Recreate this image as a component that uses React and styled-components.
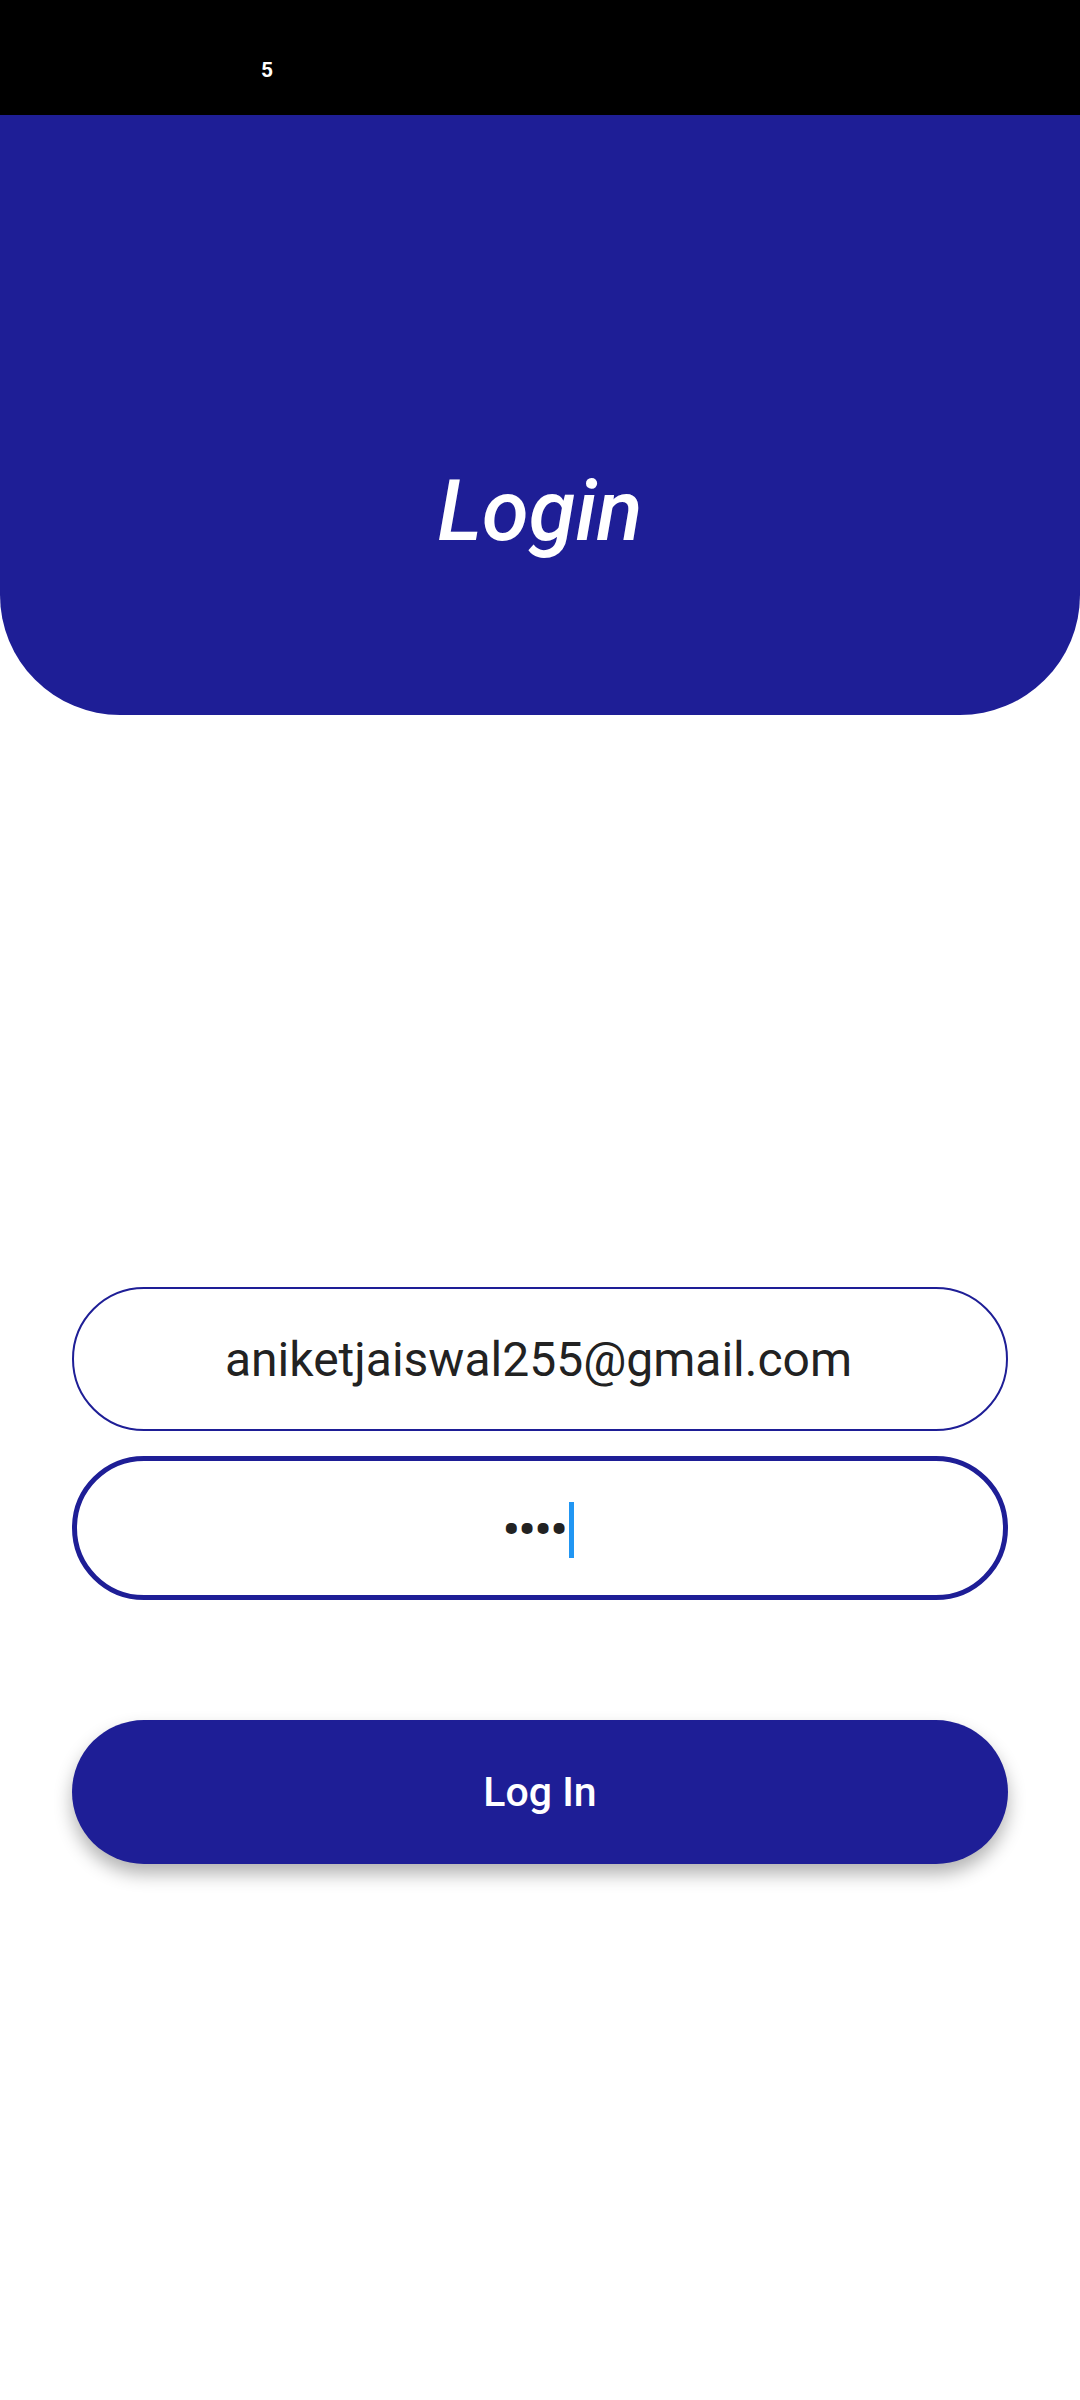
import React from "react";
import styled, { createGlobalStyle } from "styled-components";

const BLUE = "#1e1e96";

const GlobalStyle = createGlobalStyle`
  html, body {
    margin: 0;
    padding: 0;
    background: #ffffff;
  }
  body {
    font-family: Roboto, "Noto Sans", sans-serif;
  }
`;

const App = () => {
  return (
    <Page>
      <GlobalStyle />
      <StatusBar>
        <StatusText>5</StatusText>
      </StatusBar>
      <Header>
        <Title>Login</Title>
      </Header>
      <Form>
        <Field>aniketjaiswal255@gmail.com</Field>
        <Field $focused>
          <Dots>••••</Dots>
          <Caret />
        </Field>
        <LoginBtn type="button">Log In</LoginBtn>
      </Form>
    </Page>
  );
};

export default App;

const Page = styled.div`
  width: 1080px;
  min-height: 2400px;
  background: #ffffff;
  display: flex;
  flex-direction: column;
`;

const StatusBar = styled.div`
  height: 115px;
  background: #000000;
  display: flex;
  align-items: flex-start;
  padding: 60px 0 0 261px;
  box-sizing: border-box;
`;

const StatusText = styled.span`
  color: #ffffff;
  font-size: 21px;
  line-height: 21px;
  font-weight: 700;
`;

const Header = styled.div`
  height: 600px;
  box-sizing: border-box;
  padding-top: 354px;
  background: ${BLUE};
  border-radius: 0 0 120px 120px;
  display: flex;
  justify-content: center;
  align-items: flex-start;
`;

const Title = styled.h1`
  margin: 0;
  color: #ffffff;
  font-size: 85px;
  line-height: 1;
  font-style: italic;
  font-weight: 500;
`;

const Form = styled.div`
  display: flex;
  flex-direction: column;
  padding: 572px 72px 0 72px;
`;

const Field = styled.div`
  height: 144px;
  box-sizing: border-box;
  border: ${(p) => (p.$focused ? "5px" : "2.5px")} solid ${BLUE};
  border-radius: 72px;
  display: flex;
  align-items: center;
  justify-content: center;
  font-size: 48px;
  color: #222222;
  padding-right: 3px;
  margin-bottom: ${(p) => (p.$focused ? "120px" : "25px")};
`;

const Dots = styled.span`
  font-size: 47px;
  letter-spacing: -1px;
  color: #222222;
  font-weight: 700;
`;

const Caret = styled.span`
  display: inline-block;
  width: 5px;
  height: 56px;
  margin-left: 3px;
  margin-top: 4px;
  background: #2196f3;
`;

const LoginBtn = styled.button`
  height: 144px;
  border: none;
  border-radius: 72px;
  background: ${BLUE};
  color: #ffffff;
  font-family: Roboto, sans-serif;
  font-size: 41px;
  font-weight: 500;
  box-shadow: 0 10px 18px rgba(0, 0, 0, 0.3);
`;
